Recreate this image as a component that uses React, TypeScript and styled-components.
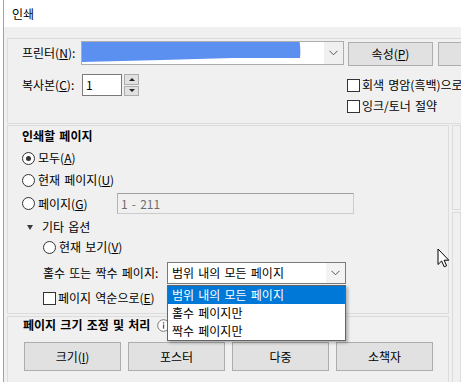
import React from "react";
import styled, { createGlobalStyle } from "styled-components";

const Global = createGlobalStyle`
  html, body { margin: 0; padding: 0; background: #fff; }
  body {
    font-family: "Noto Sans CJK KR", "Noto Sans", sans-serif;
    font-size: 12px;
    word-spacing: 1.5px;
    color: #000;
  }
  * { box-sizing: border-box; }
`;

const Screen = styled.div`
  width: 461px;
  height: 382px;
  overflow: hidden;
  position: relative;
  background: #fff;
  padding-left: 3px;
`;

const Window = styled.div`
  height: 100%;
  border-left: 1px solid #7fa9d6;
  display: flex;
  flex-direction: column;
  background: #f0f0f0;
`;

const TitleBar = styled.div`
  height: 27px;
  flex: none;
  background: #fff;
  display: flex;
  align-items: center;
  padding-left: 8px;
  line-height: 16px;
`;

const Body = styled.div`
  flex: 1;
  padding: 11px 0 0 3px;
  display: flex;
  flex-direction: column;
  gap: 1px;
`;

const Panel = styled.div<{ $w?: number; $h?: number }>`
  flex: none;
  border: 1px solid #dcdcdc;
  width: ${(p) => (p.$w ? `${p.$w}px` : "auto")};
  height: ${(p) => (p.$h ? `${p.$h}px` : "auto")};
`;

const TopPanel = styled(Panel)`
  padding: 2px 0 0 14px;
  border-right: none;
`;

const Row = styled.div<{ $h: number; $mt?: number; $pl?: number; $top?: boolean }>`
  display: flex;
  align-items: ${(p) => (p.$top ? "flex-start" : "center")};
  height: ${(p) => p.$h}px;
  margin-top: ${(p) => p.$mt ?? 0}px;
  padding-left: ${(p) => p.$pl ?? 0}px;
  line-height: 16px;
  white-space: nowrap;
  flex: none;
`;

const Label = styled.span<{ $w?: number }>`
  display: inline-block;
  width: ${(p) => (p.$w ? `${p.$w}px` : "auto")};
  flex: none;
`;

const Combo = styled.div<{ $w: number; $h?: number; $border?: string }>`
  width: ${(p) => p.$w}px;
  height: ${(p) => p.$h ?? 24}px;
  border: 1px solid ${(p) => p.$border ?? "#adadad"};
  background: #fff;
  display: flex;
  align-items: stretch;
  flex: none;
`;

const ComboText = styled.div`
  flex: 1;
  display: flex;
  align-items: center;
  padding-left: 4px;
  overflow: hidden;
`;

const ChevronBox = styled.div<{ $bg?: string }>`
  width: 19px;
  flex: none;
  display: flex;
  align-items: center;
  justify-content: center;
  background: ${(p) => p.$bg ?? "#f0f0f0"};
`;

const Button = styled.div<{ $w: number; $h: number; $mt?: number; $ml?: number }>`
  width: ${(p) => p.$w}px;
  height: ${(p) => p.$h}px;
  margin-top: ${(p) => p.$mt ?? 0}px;
  margin-left: ${(p) => p.$ml ?? 0}px;
  flex: none;
  background: #e1e1e1;
  border: 1px solid #adadad;
  display: flex;
  align-items: center;
  justify-content: center;
  line-height: 16px;
`;

const TextInput = styled.div<{ $w: number; $h: number; $disabled?: boolean }>`
  width: ${(p) => p.$w}px;
  height: ${(p) => p.$h}px;
  flex: none;
  background: ${(p) => (p.$disabled ? "#f0f0f0" : "#fff")};
  border: 1px solid ${(p) => (p.$disabled ? "#cccccc" : "#7a7a7a")};
  ${(p) => (p.$disabled ? "border-top-color: #a0a0a0; border-left-color: #b4b4b4;" : "")}
  color: ${(p) => (p.$disabled ? "#6d6d6d" : "#000")};
  padding-left: 3px;
  display: flex;
  align-items: center;
`;

const Spinner = styled.div`
  margin-left: 2px;
  display: flex;
  flex-direction: column;
  gap: 1px;
  height: 22px;
`;

const SpinBtn = styled.div`
  width: 15px;
  height: 11px;
  background: #e1e1e1;
  border: 1px solid #adadad;
  display: flex;
  align-items: center;
  justify-content: center;
`;

const Arrow = styled.span<{ $up?: boolean }>`
  width: 0;
  height: 0;
  border-left: 3px solid transparent;
  border-right: 3px solid transparent;
  ${(p) =>
    p.$up ? "border-bottom: 3px solid #222;" : "border-top: 3px solid #222;"}
`;

const CheckCol = styled.div`
  display: flex;
  flex-direction: column;
`;

const Check = styled.span`
  width: 13px;
  height: 13px;
  border: 1px solid #333;
  background: #fff;
  flex: none;
  margin-right: 2px;
`;

const Radio = styled.span<{ $on?: boolean }>`
  width: 13px;
  height: 13px;
  border-radius: 50%;
  border: 1px solid #333;
  background: #fff;
  flex: none;
  margin-right: 3px;
  display: flex;
  align-items: center;
  justify-content: center;
  &::after {
    content: "";
    width: 5px;
    height: 5px;
    border-radius: 50%;
    background: ${(p) => (p.$on ? "#333" : "transparent")};
  }
`;

const Heading = styled.div<{ $mt: number }>`
  font-weight: 700;
  height: 16px;
  line-height: 16px;
  margin-top: ${(p) => p.$mt}px;
  display: flex;
  align-items: center;
  white-space: nowrap;
`;

const U = styled.span`
  text-decoration: underline;
  text-underline-offset: 1px;
`;

const Lower = styled.div`
  display: flex;
  gap: 3px;
  align-items: flex-start;
`;

const LeftCol = styled.div`
  display: flex;
  flex-direction: column;
  gap: 2px;
`;

const PagesPanel = styled(Panel)`
  padding: 0 0 0 14px;
  display: flex;
  flex-direction: column;
`;

const ScalePanel = styled(Panel)`
  padding: 0 0 0 15px;
  display: flex;
  flex-direction: column;
`;

const ButtonRow = styled.div`
  display: flex;
  gap: 7px;
  margin-top: 9px;
  margin-left: 1px;
`;

const RightCol = styled.div`
  width: 60px;
  display: flex;
  flex-direction: column;
  gap: 2px;
`;

const Triangle = styled.span`
  width: 0;
  height: 0;
  border-left: 3.5px solid transparent;
  border-right: 3.5px solid transparent;
  border-top: 5px solid #3c3c3c;
  margin: 0 9px 0 5px;
  flex: none;
`;

const SelectWrap = styled.div`
  position: relative;
  flex: none;
`;

const DropList = styled.div`
  position: absolute;
  left: 0;
  top: 100%;
  width: 179px;
  margin-top: 1px;
  background: #fff;
  border: 1px solid #646464;
  box-shadow: 2px 2px 3px rgba(0, 0, 0, 0.28);
  z-index: 5;
`;

const DropItem = styled.div<{ $sel?: boolean }>`
  height: 18px;
  line-height: 18px;
  padding-left: 4px;
  background: ${(p) => (p.$sel ? "#0078d7" : "#fff")};
  color: ${(p) => (p.$sel ? "#fff" : "#000")};
  white-space: nowrap;
`;

const InfoIcon = styled.svg`
  margin-left: 7px;
  flex: none;
`;

const Cursor = styled.svg`
  position: absolute;
  left: 437px;
  top: 248px;
`;

const Chevron = () => (
  <svg width="9" height="6" viewBox="0 0 9 6">
    <path d="M0.5 0.8 L4.5 4.8 L8.5 0.8" fill="none" stroke="#555" strokeWidth="1" />
  </svg>
);

export default function App() {
  return (
    <Screen>
      <Global />
      <Window>
        <TitleBar>인쇄</TitleBar>
        <Body>
          <TopPanel $w={600} $h={86}>
            <Row $h={24}>
              <Label $w={59}>
                프린터(<U>N</U>):
              </Label>
              <Combo $w={263}>
                <svg width="220" height="22" viewBox="0 0 220 22" style={{ flex: "none" }}>
                  <path
                    d="M-1 -1 L60 -1 L140 -2 L217 -3 Q219 6 218 16 L150 16 L80 18 L-1 20 Z"
                    fill="#5b8ff0"
                  />
                </svg>
                <ComboText />
                <ChevronBox>
                  <Chevron />
                </ChevronBox>
              </Combo>
              <Button $w={85} $h={24} $mt={2} $ml={4}>
                속성(<U>P</U>)
              </Button>
              <Button $w={85} $h={24} $mt={2} $ml={5} />
            </Row>
            <Row $h={22} $mt={9} $top>
              <Label $w={325}>
                <Row $h={22}>
                  <Label $w={60}>
                    복사본(<U>C</U>):
                  </Label>
                  <TextInput $w={40} $h={22}>
                    1
                  </TextInput>
                  <Spinner>
                    <SpinBtn>
                      <Arrow $up />
                    </SpinBtn>
                    <SpinBtn>
                      <Arrow />
                    </SpinBtn>
                  </Spinner>
                </Row>
              </Label>
              <CheckCol>
                <Row $h={22}>
                  <Check />
                  회색 명암(흑백)으로
                </Row>
                <Row $h={20}>
                  <Check />
                  잉크/토너 절약
                </Row>
              </CheckCol>
            </Row>
          </TopPanel>
          <Lower>
            <LeftCol>
              <PagesPanel $w={442} $h={189}>
                <Heading $mt={2}>인쇄할 페이지</Heading>
                <Row $h={22} $mt={3}>
                  <Radio $on />
                  모두(<U>A</U>)
                </Row>
                <Row $h={22}>
                  <Radio />
                  현재 페이지(<U>U</U>)
                </Row>
                <Row $h={21} $mt={2}>
                  <Label $w={95}>
                    <Row $h={21}>
                      <Radio />
                      페이지(<U>G</U>)
                    </Row>
                  </Label>
                  <TextInput $w={237} $h={21} $disabled>
                    1 - 211
                  </TextInput>
                </Row>
                <Row $h={20} $mt={3}>
                  <Triangle />
                  기타 옵션
                </Row>
                <Row $h={20} $pl={21}>
                  <Radio />
                  현재 보기(<U>V</U>)
                </Row>
                <Row $h={22} $mt={5} $pl={21}>
                  <Label $w={124}>홀수 또는 짝수 페이지:</Label>
                  <SelectWrap>
                    <Combo $w={179} $h={22} $border="#7a7a7a">
                      <ComboText>범위 내의 모든 페이지</ComboText>
                      <ChevronBox $bg="#f3f3f3">
                        <Chevron />
                      </ChevronBox>
                    </Combo>
                    <DropList>
                      <DropItem $sel>범위 내의 모든 페이지</DropItem>
                      <DropItem>홀수 페이지만</DropItem>
                      <DropItem>짝수 페이지만</DropItem>
                    </DropList>
                  </SelectWrap>
                </Row>
                <Row $h={20} $mt={4} $pl={21}>
                  <Check />
                  페이지 역순으로(<U>E</U>)
                </Row>
              </PagesPanel>
              <ScalePanel $w={442} $h={80}>
                <Heading $mt={0}>
                  페이지 크기 조정 및 처리
                  <InfoIcon width="13" height="13" viewBox="0 0 13 13">
                    <circle cx="6.5" cy="6.5" r="5.8" fill="#fff" stroke="#777" strokeWidth="1" />
                    <rect x="5.9" y="5.5" width="1.3" height="4.2" fill="#555" />
                    <rect x="5.9" y="3.2" width="1.3" height="1.3" fill="#555" />
                  </InfoIcon>
                </Heading>
                <ButtonRow>
                  <Button $w={97} $h={29}>
                    크기(<U>I</U>)
                  </Button>
                  <Button $w={97} $h={29}>
                    포스터
                  </Button>
                  <Button $w={97} $h={29}>
                    다중
                  </Button>
                  <Button $w={97} $h={29}>
                    소책자
                  </Button>
                </ButtonRow>
              </ScalePanel>
            </LeftCol>
            <RightCol>
              <Panel $h={85} />
              <Panel $h={180} />
            </RightCol>
          </Lower>
        </Body>
      </Window>
      <Cursor width="14" height="21" viewBox="0 0 14 21">
        <path
          d="M1 1 L1 16.5 L4.6 13 L7.2 18.8 L9.6 17.8 L7.1 12.2 L11.8 12.2 Z"
          fill="#fff"
          stroke="#000"
          strokeWidth="1"
          strokeLinejoin="miter"
        />
      </Cursor>
    </Screen>
  );
}
